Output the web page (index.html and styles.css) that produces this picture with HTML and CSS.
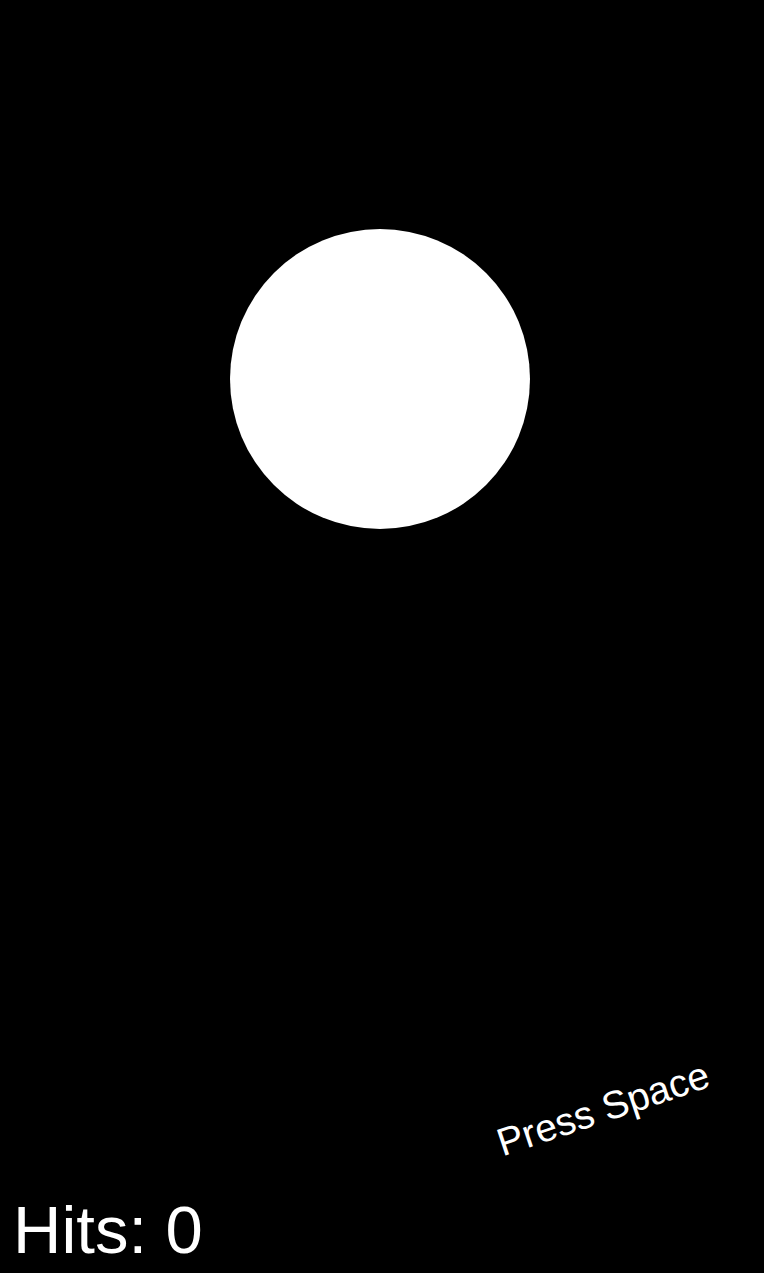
FILE: index.html
```html
<!DOCTYPE html>
<html>
<head>
<meta charset="utf-8">
<link rel="stylesheet" href="styles.css">
</head>
<body>
<div class="stage">
  <div class="ball"></div>
  <div class="prompt">Press Space</div>
  <div class="score">Hits: 0</div>
</div>
</body>
</html>
```
FILE: styles.css
```css
html, body {
  margin: 0;
  padding: 0;
  background: #000;
}
.stage {
  position: relative;
  width: 764px;
  height: 1273px;
  background: #000;
  overflow: hidden;
  font-family: "Liberation Sans", Arial, sans-serif;
  color: #fff;
}
.ball {
  position: absolute;
  left: 230px;
  top: 229px;
  width: 300px;
  height: 300px;
  border-radius: 50%;
  background: #fff;
}
.prompt {
  position: absolute;
  left: 492px;
  top: 1089px;
  width: 222px;
  height: 39px;
  font-size: 39px;
  line-height: 39px;
  white-space: nowrap;
  text-align: center;
  transform: rotate(-18.5deg);
  transform-origin: 50% 50%;
}
.score {
  position: absolute;
  left: 13px;
  top: 1196px;
  font-size: 67px;
  line-height: 67px;
  white-space: nowrap;
}
```
